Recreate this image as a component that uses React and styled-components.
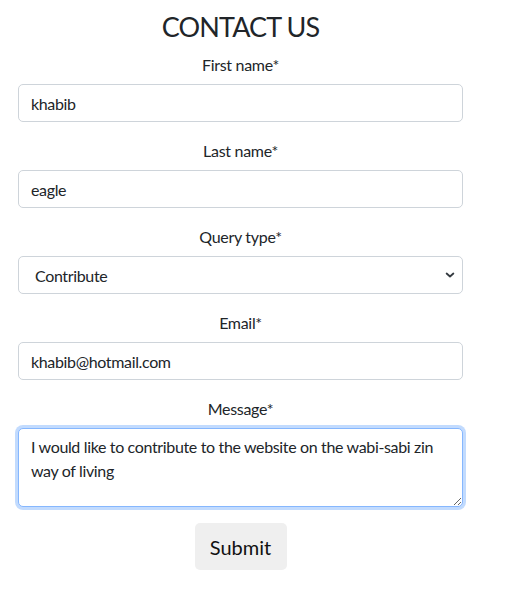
import React from "react";
import styled, { createGlobalStyle } from "styled-components";

const Global = createGlobalStyle`
  html, body { margin: 0; padding: 0; background: #fff; }
  body { font-family: Lato, "Open Sans", sans-serif; color: #212529; }
  * { box-sizing: border-box; }
`;

const Page = styled.div`
  width: 481px;
  padding: 10px 18px 0;
  display: flex;
  flex-direction: column;
  align-items: center;
`;

const Title = styled.h1`
  margin: 0 0 9px;
  font-size: 27px;
  font-weight: 400;
  line-height: 34px;
  letter-spacing: -0.9px;
`;

const Form = styled.form`
  width: 100%;
  display: flex;
  flex-direction: column;
  align-items: center;
`;

const Field = styled.div`
  width: 100%;
  display: flex;
  flex-direction: column;
  align-items: center;
  margin-bottom: ${(p) => p.$mb || 17}px;
`;

const Label = styled.label`
  font-size: 16px;
  line-height: 24px;
  margin-bottom: 7px;
  letter-spacing: -0.3px;
`;

const controlBase = `
  width: 100%;
  font-family: Lato, "Open Sans", sans-serif;
  font-size: 16px;
  letter-spacing: -0.35px;
  color: #212529;
  background-color: #fff;
  border: 1px solid #ced4da;
  border-radius: 5px;
  outline: none;
`;

const Input = styled.input`
  ${controlBase}
  height: 38px;
  padding: 0 12px;
`;

const Select = styled.select`
  ${controlBase}
  height: 38px;
  padding: 0 36px 0 16px;
  appearance: none;
  -webkit-appearance: none;
  background-image: url("data:image/svg+xml,%3csvg xmlns='http://www.w3.org/2000/svg' viewBox='0 0 16 16'%3e%3cpath fill='none' stroke='%23343a40' stroke-linecap='round' stroke-linejoin='round' stroke-width='2.4' d='M3.5 6l4.5 4 4.5-4'/%3e%3c/svg%3e");
  background-repeat: no-repeat;
  background-position: right 6px center;
  background-size: 12px 12px;
`;

const TextArea = styled.textarea`
  ${controlBase}
  height: 79px;
  padding: 6px 12px;
  line-height: 24px;
  resize: vertical;
  border-color: #86b7fe;
  box-shadow: 0 0 0 3px rgba(13, 110, 253, 0.25);
`;

const Button = styled.button`
  font-family: Lato, "Open Sans", sans-serif;
  font-size: 20px;
  color: #111;
  background: #efefef;
  border: none;
  border-radius: 5px;
  width: 92px;
  height: 47px;
  cursor: pointer;
`;

export default function App() {
  return (
    <>
      <Global />
      <Page>
        <Title>CONTACT US</Title>
        <Form onSubmit={(e) => e.preventDefault()}>
          <Field>
            <Label htmlFor="fn">First name*</Label>
            <Input id="fn" defaultValue="khabib" />
          </Field>
          <Field>
            <Label htmlFor="ln">Last name*</Label>
            <Input id="ln" defaultValue="eagle" />
          </Field>
          <Field>
            <Label htmlFor="qt">Query type*</Label>
            <Select id="qt" defaultValue="Contribute">
              <option>Contribute</option>
              <option>Question</option>
              <option>Other</option>
            </Select>
          </Field>
          <Field>
            <Label htmlFor="em">Email*</Label>
            <Input id="em" type="email" defaultValue="khabib@hotmail.com" />
          </Field>
          <Field $mb={16}>
            <Label htmlFor="msg">Message*</Label>
            <TextArea
              id="msg"
              defaultValue="I would like to contribute to the website on the wabi-sabi zin way of living"
            />
          </Field>
          <Button type="submit">Submit</Button>
        </Form>
      </Page>
    </>
  );
}
